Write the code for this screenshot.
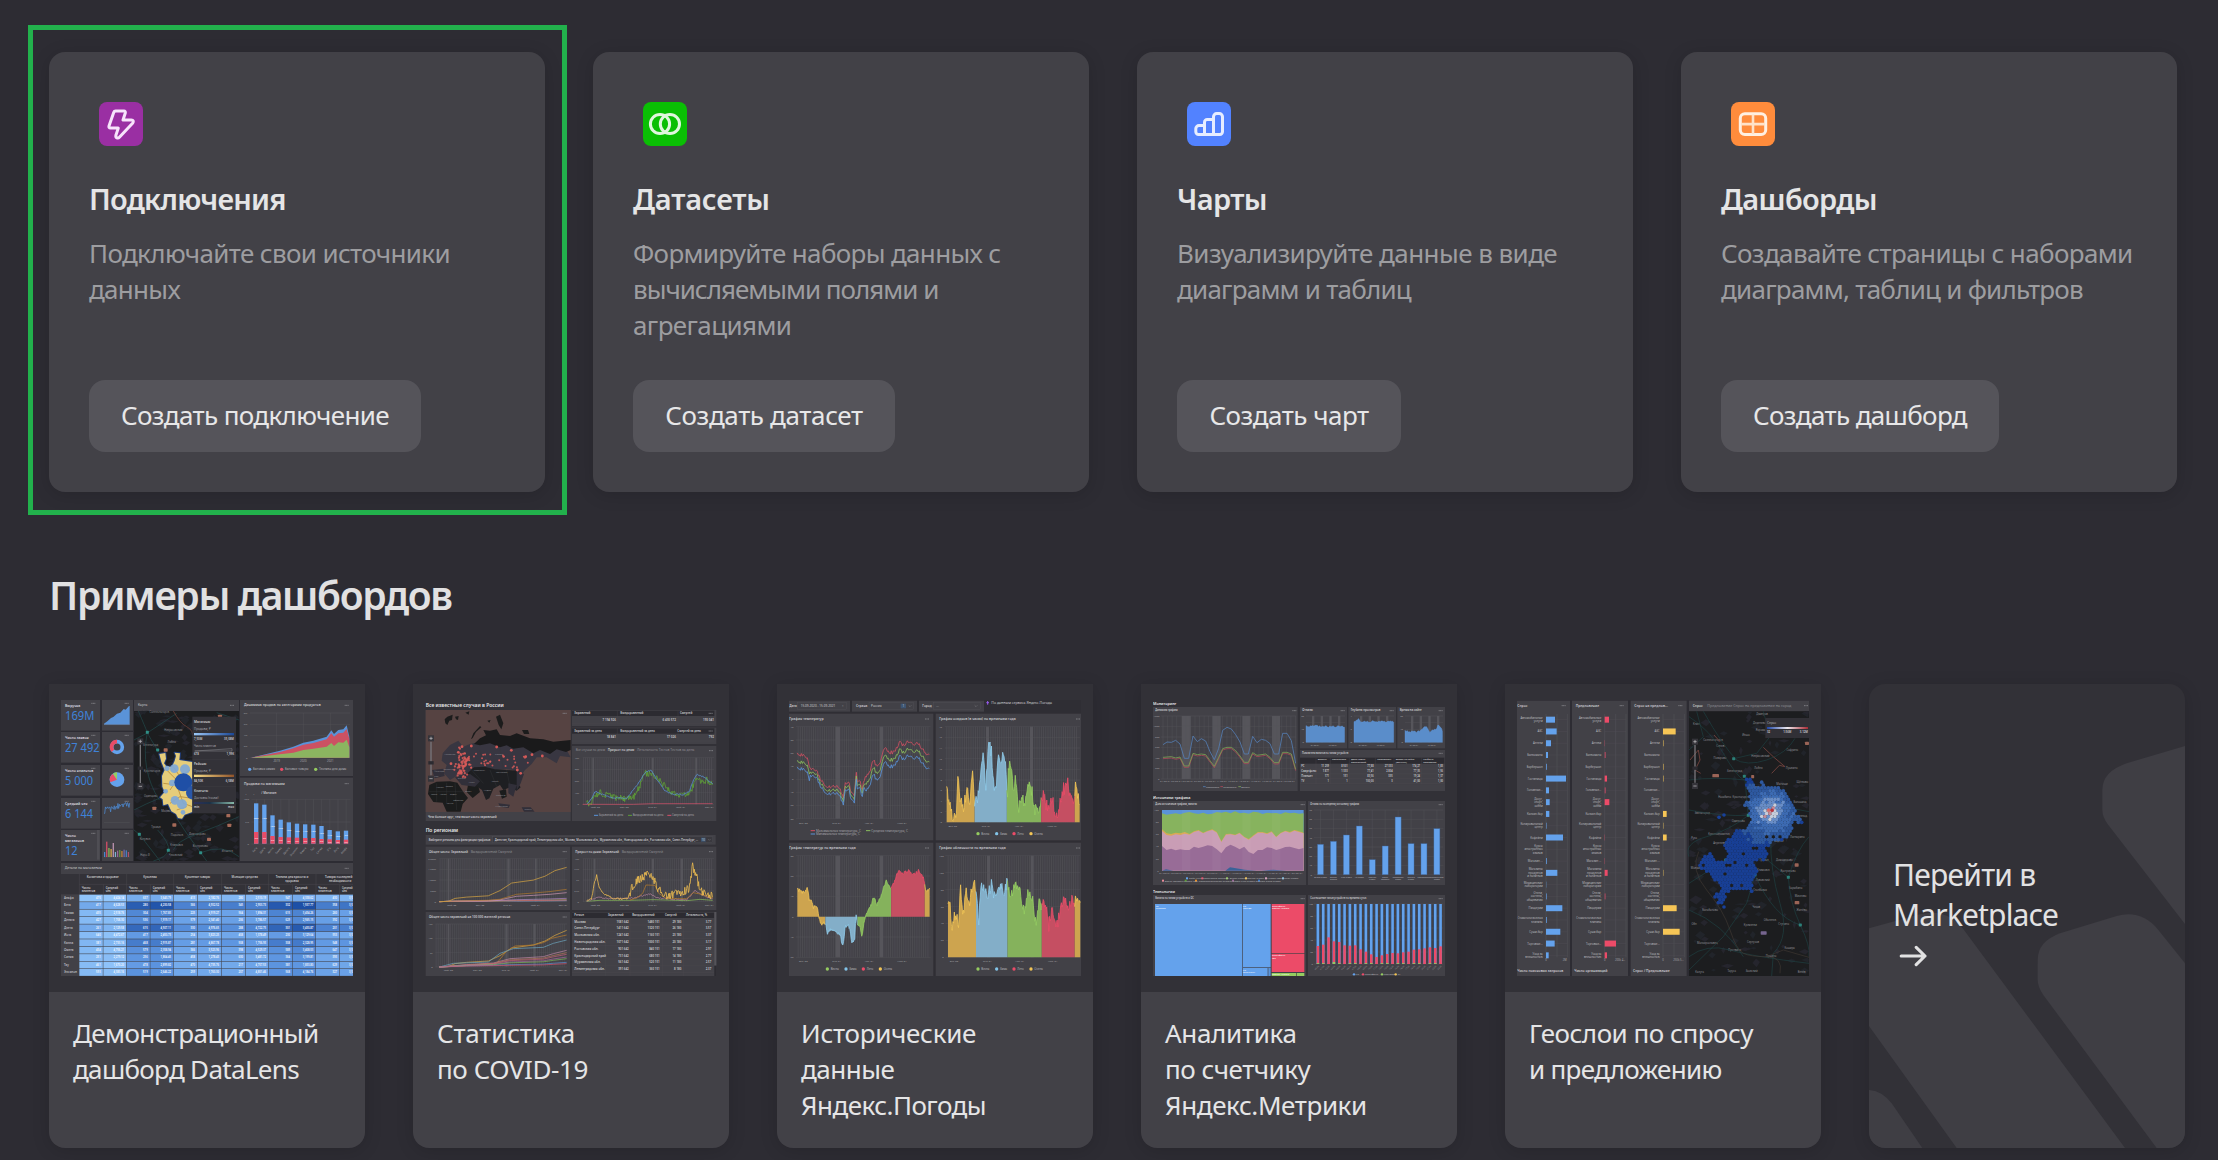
import type { ReactNode } from "react";

type Pt = [number, number];

/* ---------- drawing helpers for the dashboard previews ---------- */

function rng(seed: number) {
  let s = seed;
  return () => {
    s = (s * 1664525 + 1013904223) % 4294967296;
    return s / 4294967296;
  };
}

function interp(keys: Pt[], x: number) {
  for (let i = 1; i < keys.length; i++) {
    if (x <= keys[i][0]) {
      const [x0, y0] = keys[i - 1];
      const [x1, y1] = keys[i];
      return y0 + ((y1 - y0) * (x - x0)) / (x1 - x0 || 1);
    }
  }
  return keys[keys.length - 1][1];
}

function noisy(keys: Pt[], step: number, amp: number, seed: number): Pt[] {
  const r = rng(seed);
  const out: Pt[] = [];
  for (let x = keys[0][0]; x <= keys[keys.length - 1][0]; x += step) {
    out.push([x, interp(keys, x) + (r() - 0.5) * 2 * amp]);
  }
  return out;
}

const path = (p: Pt[]) => "M" + p.map(([x, y]) => `${x.toFixed(1)} ${y.toFixed(1)}`).join("L");
const area = (p: Pt[], base: number) => `${path(p)}L${p[p.length - 1][0]} ${base}L${p[0][0]} ${base}Z`;

function mix(t: number) {
  const stops = [
    [148, 200, 252],
    [94, 150, 225],
    [22, 72, 160],
  ];
  const k = Math.max(0, Math.min(1, t)) * 2;
  const i = Math.min(1, Math.floor(k));
  const f = k - i;
  return `rgb(${stops[i].map((c, n) => Math.round(c + (stops[i + 1][n] - c) * f)).join(",")})`;
}

function P({ x, y, r, b, fill = "#424147" }: { x: number; y: number; r: number; b: number; fill?: string }) {
  return <rect x={x} y={y} width={r - x} height={b - y} fill={fill} />;
}

function T({
  x,
  y,
  s = 9,
  fill = "#cbcbcf",
  w,
  bold,
  anchor,
  children,
}: {
  x: number;
  y: number;
  s?: number;
  fill?: string;
  w?: number;
  bold?: boolean;
  anchor?: "start" | "middle" | "end";
  children: ReactNode;
}) {
  return (
    <text
      x={x}
      y={y}
      fontSize={s}
      fill={fill}
      fontWeight={bold ? 600 : 400}
      textAnchor={anchor}
      textLength={w}
      lengthAdjust="spacingAndGlyphs"
    >
      {children}
    </text>
  );
}

function Dots({ x, y }: { x: number; y: number }) {
  return <path d={`M${x - 6} ${y}h12`} stroke="#8d8d92" strokeWidth="2.4" strokeDasharray="3.4 1" />;
}

function Grid({ x, r, ys, xs = [] }: { x: number; r: number; ys: number[]; xs?: number[] }) {
  return (
    <g stroke="#57565c" strokeWidth="1.2">
      {ys.map((y) => (
        <path key={y} d={`M${x} ${y}H${r}`} />
      ))}
      {xs.map((v) => (
        <path key={v} d={`M${v} ${ys[0]}V${ys[ys.length - 1]}`} />
      ))}
    </g>
  );
}

function Stripes({ x, r, y, b, step = 6.2, bands = [] }: { x: number; r: number; y: number; b: number; step?: number; bands?: Pt[] }) {
  const n = Math.floor((r - x) / step);
  return (
    <g>
      {Array.from({ length: n }, (_, i) => (
        <rect key={i} x={x + i * step + 1} y={y} width={step * 0.42} height={b - y} fill="#4d4c52" />
      ))}
      {bands.map(([bx, bw]) => (
        <rect key={bx} x={bx} y={y} width={bw} height={b - y} fill="#56555b" />
      ))}
    </g>
  );
}

function Axis({ x, ys, labels }: { x: number; ys: number[]; labels: string[] }) {
  return (
    <g>
      {ys.map((y, i) => (
        <T key={y} x={x} y={y + 2.5} s={7.5} fill="#9a9a9f" anchor="end">
          {labels[i]}
        </T>
      ))}
    </g>
  );
}

function Labels({ items, y, s = 7.5, fill = "#a5a5aa" }: { items: [number, string][]; y: number; s?: number; fill?: string }) {
  return (
    <g>
      {items.map(([x, t]) => (
        <T key={x} x={x} y={y} s={s} fill={fill} anchor="middle">
          {t}
        </T>
      ))}
    </g>
  );
}

function Preview({ box, children }: { box: string; children: ReactNode }) {
  return (
    <svg viewBox={box} className="h-[276px] w-[292px] shrink-0 font-['Noto_Sans',sans-serif]" preserveAspectRatio="none">
      {children}
    </svg>
  );
}

function DarkMap({ x, y, r, b, seed, names }: { x: number; y: number; r: number; b: number; seed: number; names: [number, number, string][] }) {
  const q = rng(seed);
  const blobs = Array.from({ length: 170 }, () => [x + q() * (r - x), y + q() * (b - y), 4 + q() * 16, 3 + q() * 11]);
  return (
    <g>
      <P x={x} y={y} r={r} b={b} fill="#1c1d1f" />
      {blobs.map(([cx, cy, w, h], i) => (
        <path
          key={i}
          d={`M${Math.max(x, cx - w)} ${cy}L${cx} ${Math.max(y, cy - h)}L${Math.min(r, cx + w)} ${cy - h * 0.2}L${cx + w * 0.1} ${Math.min(b, cy + h)}Z`}
          fill={i % 2 ? "#25252d" : "#21242a"}
        />
      ))}
      {names.map(([nx, ny, t], i) => (
        <T key={i} x={nx} y={ny} s={8} fill="#8f8f95" anchor="middle">
          {t}
        </T>
      ))}
    </g>
  );
}

function Zoomer({ x, y, b }: { x: number; y: number; b: number }) {
  return (
    <g>
      <rect x={x - 9} y={y - 9} width="18" height="18" fill="#35343a" />
      <rect x={x - 9} y={b - 9} width="18" height="18" fill="#35343a" />
      <path d={`M${x} ${y + 10}V${b - 10}`} stroke="#77767b" strokeWidth="4" />
      <path d={`M${x - 5} ${y}h10M${x} ${y - 5}v10M${x - 5} ${b}h10`} stroke="#c9c9cc" strokeWidth="2" />
      <rect x={x - 8} y={(y + b) / 2 + 8} width="16" height="10" fill="#2b2a30" />
    </g>
  );
}

/* ---------- preview 1: sales demo ---------- */

const DEMO_ROWS: [string, number][] = [
  ["Альфа", 0],
  ["Бета", 0.42],
  ["Гамма", 0.16],
  ["Дельта", 0.16],
  ["Дзета", 0.36],
  ["Йота", 0.06],
  ["Каппа", 0.24],
  ["Омега", 0.14],
  ["Сигма", 0.1],
  ["Тау", 0.08],
  ["Эпсилон", 0.12],
];
const DEMO_COLS = [148, 220, 290, 361, 431, 503, 575, 647, 716, 788, 858, 929, 1000];
const DEMO_BASE = [0.08, 0.04, 0.5, 0.52, 0.3, 0.3, 0.32, 0.34, 0.52, 0.54, 0.34, 0.36];

function DemoPreview() {
  const kpis: [string, string, number, number][] = [
    ["Выручка", "169M", 90, 88],
    ["Число заявок", "27 492", 186, 104],
    ["Число клиентов", "5 000", 285, 84],
    ["Средний чек", "6 144", 384, 84],
    ["", "12", 480, 38],
  ];
  const cell = rng(7);
  const tops = [400, 404, 436, 449, 457, 461, 463, 464, 468, 480, 484, 482];
  const reds = [486, 486, 498, 501, 502, 503, 504, 504, 507, 508, 510, 509];
  const bars = [546, 515, 534, 537, 519, 546, 542, 540, 543, 539, 541, 546];
  const colors = ["#4a86cf", "#e0506a", "#8dc35a", "#e0b04a", "#c79ab8", "#7fb4cf", "#9a6a9a", "#6a9a4a", "#cf8a3a", "#7a6ab0", "#4a86cf", "#b0506a"];
  const grow: Pt[] = [[663, 263], [700, 254], [750, 242], [790, 230], [820, 218], [850, 212], [890, 200], [904, 181], [912, 192], [925, 180], [940, 178], [950, 166], [958, 200]];
  const grow2: Pt[] = [[663, 263], [700, 256], [750, 246], [790, 235], [820, 224], [850, 219], [890, 208], [904, 190], [912, 200], [925, 190], [940, 188], [950, 177], [958, 206]];
  const grow3: Pt[] = [[663, 263], [700, 259], [750, 253], [790, 248], [820, 240], [850, 236], [890, 230], [904, 219], [912, 228], [925, 217], [940, 218], [950, 209], [958, 232]];
  const names: [number, number, string][] = [
    [388, 130, "Солнечногорск"], [430, 182, "Некрасовский"], [425, 218, "Лобня"], [362, 228, "Зеленоград"], [362, 382, "Одинцово"], [378, 473, "Троицк"],
    [441, 499, "Подольск"], [502, 496, "Домодедово"], [345, 511, "Калужск"], [440, 527, "Климовск"], [511, 531, "Востряково"], [437, 557, "Чеховский"],
    [592, 545, "Ильинск"], [345, 558, "Наро-Ф"], [408, 426, "Москва"], [366, 305, "Красногорск"],
  ];
  return (
    <Preview box="93 90 876 828">
      <P x={93} y={90} r={969} b={918} fill="#2d2c33" />
      {kpis.map(([label, value, y, w], i) => (
        <g key={y}>
          <P x={93} y={y} r={210} b={i === 4 ? 573 : y + 92} />
          <P x={216} y={y} r={309} b={i === 4 ? 573 : y + 92} />
          <T x={105} y={y + 21} s={10.5} bold fill="#dcdce0">
            {label}
          </T>
          <T x={105} y={i === 4 ? 556 : y + 61} s={36} fill="#3f82d8" w={w}>
            {value}
          </T>
          <Dots x={190} y={y + 10} />
          <Dots x={290} y={y + 10} />
        </g>
      ))}
      <T x={105} y={502} s={10.5} bold fill="#dcdce0">Число</T>
      <T x={105} y={516} s={10.5} bold fill="#dcdce0">магазинов</T>
      <P x={201} y={480} r={209} b={569} fill="#4f4e54" />
      <path d={area([[222, 161], [232, 154], [243, 144], [250, 141], [261, 131], [271, 128], [281, 117], [287, 119], [297, 108], [299, 108]], 164)} fill="#5a93d8" />
      <path d="M222 164H300" stroke="#77767c" />
      <circle cx={261} cy={231} r={16} fill="none" stroke="#64a2ec" strokeWidth={11} />
      <path d="M249 242A16 16 0 0 1 261 215" fill="none" stroke="#e94c66" strokeWidth={11} />
      <circle cx={261} cy={329} r={22} fill="#64a2ec" />
      <path d="M261 329L241 337A22 22 0 0 1 249 311Z" fill="#e94c66" />
      <path d="M261 329L249 311A22 22 0 0 1 261 307Z" fill="#95cc60" />
      <path d={path(noisy([[222, 436], [228, 408], [240, 420], [260, 410], [275, 402], [299, 404]], 2.2, 9, 5))} fill="none" stroke="#4d86cc" strokeWidth="2.4" />
      <path d="M222 458H299M222 561H300" stroke="#5f5e64" />
      {bars.map((y, i) => (
        <rect key={i} x={222 + i * 6.5} y={y} width={3.6} height={561 - y} fill={colors[i]} />
      ))}

      <P x={312} y={90} r={627} b={123} />
      <T x={324} y={109} s={10}>Карта</T>
      <Dots x={606} y={106} />
      <DarkMap x={312} y={123} r={627} b={573} seed={11} names={names} />
      <path
        d="M325 123Q345 170 352 187T383 240M312 210L350 190L440 130M627 150L560 128M383 480Q420 520 415 541T370 573M312 480L328 493L390 573M440 445L470 490L512 548L530 573M627 440Q560 470 500 492T430 540M312 420Q350 400 388 385M512 548Q580 520 627 560M352 187Q330 300 388 390"
        fill="none"
        stroke="#245052"
        strokeWidth="1.8"
      />
      <path d="M430 123Q450 160 470 170T490 205M405 245L395 270" fill="none" stroke="#6a3f38" strokeWidth="2.6" />
      <g fill="#2f8f86">
        {[[352, 187], [328, 493], [415, 541], [512, 548], [383, 240]].map(([cx, cy]) => (
          <rect key={cx} x={cx - 4.5} y={cy - 4.5} width="9" height="9" rx="2" />
        ))}
      </g>
      <g fill="#a56a58">
        {[[570, 139], [407, 240], [373, 415], [433, 465], [595, 437], [537, 508], [598, 466]].map(([cx, cy]) => (
          <rect key={cx} x={cx - 6} y={cy - 5} width="12" height="10" rx="2" />
        ))}
      </g>
      <path
        d="M388 252L406 249L408 266L402 280L410 290L426 290L434 272L438 258L434 248L450 250L448 270L487 276V426L464 434L456 446L444 444L438 432L424 424L414 402L400 406L398 388L390 382L404 366L397 350L396 318L404 300L394 276Z"
        fill="#e6cd7a"
        stroke="#223f7c"
        strokeWidth="6"
        strokeLinejoin="round"
        paintOrder="stroke"
      />
      <path d="M410 300L440 330L420 360M430 290L450 320L480 300M400 340L440 345L460 400L487 410M420 400L450 380L487 385M440 420L470 410" fill="none" stroke="#b98d3a" strokeWidth="2.5" />
      <g fill="#7fa9d8" opacity="0.92">
        <circle cx={411} cy={295} r={8} />
        <circle cx={433} cy={296} r={13} />
        <circle cx={465} cy={298} r={15} />
        <circle cx={427} cy={339} r={10} />
        <circle cx={407} cy={364} r={7} />
        <circle cx={435} cy={391} r={13} />
        <circle cx={456} cy={403} r={15} />
        <circle cx={459} cy={427} r={7} />
      </g>
      <circle cx={460} cy={337} r={27} fill="#1f4fa6" />
      <circle cx={489} cy={368} r={21} fill="#2a57a8" />
      <Zoomer x={331} y={214} b={349} />
      <P x={487} y={140} r={618} b={430} fill="#333238" />
      <path d="M487 269H618M487 349H618" stroke="#47464c" />
      <defs>
        <linearGradient id="demoBlue"><stop stopColor="#9cc7f7" /><stop offset="1" stopColor="#1a4694" /></linearGradient>
        <linearGradient id="demoGold"><stop stopColor="#f6dc87" /><stop offset="1" stopColor="#90532a" /></linearGradient>
        <linearGradient id="demoSea"><stop stopColor="#2d2f5c" /><stop offset=".4" stopColor="#1c3146" /><stop offset="1" stopColor="#86b8a8" /></linearGradient>
      </defs>
      <T x={492} y={160} s={9.5} bold>Магазины</T>
      <T x={492} y={181} s={9} fill="#a5a5aa">Продажи, ₽</T>
      <rect x={492} y={189} width={120} height={7} fill="url(#demoBlue)" />
      <T x={492} y={210} s={8.5} bold>7,50M</T>
      <T x={612} y={210} s={8.5} bold anchor="end">35,08M</T>
      <T x={492} y={232} s={8.5} fill="#a5a5aa">Число клиентов</T>
      <path d="M494 243L606 236V243Z" fill="none" stroke="#8d8d92" strokeWidth="1.5" />
      <T x={492} y={254} s={8.5} bold>678</T>
      <T x={612} y={254} s={8.5} bold anchor="end">1,99K</T>
      <T x={492} y={286} s={9.5} bold>Районы</T>
      <T x={492} y={307} s={9} fill="#a5a5aa">Продажи, ₽</T>
      <rect x={492} y={314} width={120} height={7} fill="url(#demoGold)" />
      <T x={492} y={335} s={8.5} bold>84,50K</T>
      <T x={612} y={335} s={8.5} bold anchor="end">6,58M</T>
      <T x={492} y={366} s={9.5} bold>Клиенты</T>
      <T x={492} y={386} s={9} fill="#a5a5aa">Доставка (точки)</T>
      <rect x={492} y={396} width={120} height={6} fill="url(#demoSea)" />
      <T x={492} y={414} s={8.5} bold>min</T>
      <T x={612} y={414} s={8.5} bold anchor="end">max</T>

      <P x={630} y={90} r={969} b={318} />
      <T x={642} y={109} s={10} w={230} bold>Динамика продаж по категориям продуктов</T>
      <Dots x={950} y={106} />
      <Grid x={660} r={960} ys={[129, 163, 196, 229, 263]} xs={[740, 820, 901]} />
      <Axis x={652} ys={[129, 163, 196, 229, 263]} labels={["8M", "6M", "4M", "2M", "0"]} />
      <path d={area(grow, 263)} fill="#5a92d8" />
      <path d={area(grow2, 263)} fill="#cc5163" />
      <path d={area(grow3, 263)} fill="#8bb560" />
      <Labels y={277} s={8.5} items={[[740, "2019"], [820, "2020"], [901, "2021"]]} />
      {[["#64a2ec", 659, "Бытовая химия", 66], ["#e94c66", 755, "Бытовые товары", 70], ["#95cc60", 857, "Техника для дома", 82]].map(([c, x, t, w]) => (
        <g key={x as number}>
          <circle cx={x as number} cy={298} r={5} fill={c as string} />
          <T x={(x as number) + 10} y={301} s={9} w={w as number} fill="#b5b5ba">{t}</T>
        </g>
      ))}

      <P x={630} y={323} r={969} b={573} />
      <T x={642} y={345} s={10} w={122} bold>Продажи по магазинам</T>
      <Dots x={950} y={341} />
      <T x={644} y={374} s={10}>←</T>
      <T x={664} y={374} s={10}>→</T>
      <T x={694} y={373} s={9} bold>/ Магазин</T>
      <Grid x={664} r={962} ys={[388, 456, 522]} xs={tops.map((_, i) => 679 + i * 24.5)} />
      <Axis x={657} ys={[388, 456, 522]} labels={["10M", "5M", "0"]} />
      {tops.map((y, i) => (
        <g key={i}>
          <rect x={672 + i * 24.5} y={y} width={13} height={521 - y} fill="#64a2ec" />
          <rect x={672 + i * 24.5} y={reds[i]} width={13} height={521 - reds[i]} fill="#e94c66" />
          <T x={679 + i * 24.5} y={(y + reds[i]) / 2 + 3} s={6.5} fill="#fff" anchor="middle">{`${20 - i}M`}</T>
          <T x={679 + i * 24.5} y={(reds[i] + 521) / 2 + 3} s={6.5} fill="#fff" anchor="middle">5M</T>
          <text x={682 + i * 24.5} y={534} fontSize={8} fill="#a5a5aa" textAnchor="end" transform={`rotate(-50 ${682 + i * 24.5} 534)`}>
            {["Бета", "Дзета", "Каппа", "Гамма", "Дельта", "Эпсилон", "Омега", "Тау", "Сигма", "Эта", "Йота", "Альфа"][i]}
          </text>
        </g>
      ))}

      <P x={93} y={579} r={969} b={918} />
      <T x={104} y={598} s={10} w={112}>Детали по магазинам</T>
      <Dots x={950} y={595} />
      <P x={93} y={612} r={969} b={673} fill="#333238" />
      {["Косметика и здоровье", "Кухонная", "Кухонные товары", "Моющие средства", "Техника для красоты и"].map((t, i) => (
        <T key={t} x={218 + i * 142} y={625} s={8.5} bold anchor="middle">{t}</T>
      ))}
      <T x={786} y={636} s={8.5} bold anchor="middle">здоровья</T>
      <T x={967} y={625} s={8.5} w={82} bold anchor="end">Товары последней</T>
      <T x={964} y={636} s={8.5} bold anchor="end">необходимости</T>
      <path d="M148 643H969M148 612V673M290 612V673M431 612V673M575 612V673M716 612V673M858 612V673M220 643V673M361 643V673M503 643V673M647 643V673M788 643V673M929 643V673" stroke="#4a494f" strokeWidth="1.5" />
      {DEMO_COLS.slice(0, 12).map((x, i) => (
        <g key={x}>
          <T x={x + 7} y={656} s={8.5} bold w={i === 11 ? 32 : undefined}>{i % 2 ? "Средний" : "Число"}</T>
          <T x={x + 7} y={667} s={8.5} bold>{i % 2 ? "чек" : "клиентов"}</T>
        </g>
      ))}
      {DEMO_ROWS.map(([name, k], ri) => {
        const y = 674 + ri * 22.3;
        return (
          <g key={name}>
            <T x={102} y={y + 13} s={9} bold fill="#bdbdc2">{name}</T>
            {DEMO_COLS.slice(0, 12).map((x, ci) => {
              const v = DEMO_BASE[ci] * 0.75 + k * (0.5 + DEMO_BASE[ci] * 1.4) + (cell() - 0.5) * 0.06;
              const n = 1 + Math.floor(cell() * 4);
              const whole = 100 + Math.floor(cell() * 899);
              const cents = 10 + Math.floor(cell() * 89);
              return (
                <g key={x}>
                  <rect x={x} y={y} width={DEMO_COLS[ci + 1] - x - 1.5} height={20.6} fill={mix(ri === 0 ? DEMO_BASE[ci] * 0.55 : v)} />
                  <T x={ci === 11 ? 968 : DEMO_COLS[ci + 1] - 8} y={y + 13} s={8} bold fill="#f3f7ff" anchor="end">
                    {ci === 11 ? "3,5" : ci % 2 ? `${n},${whole}.${cents}` : 150 + Math.floor(whole / 2)}
                  </T>
                </g>
              );
            })}
          </g>
        );
      })}
    </Preview>
  );
}

/* ---------- preview 2: COVID-19 ---------- */

function CovidPreview() {
  const q = rng(31);
  const dots = Array.from({ length: 104 }, (_, i) => {
    if (i < 62) return [187 + (q() + q() + q() - 1.5) * 20, 283 + (q() + q() + q() - 1.5) * 40, 3.4];
    return [195 + Math.pow(q(), 1.8) * 190, 250 + q() * 46, 3];
  });
  const regions = ["Москва", "Санкт-Петербург", "Московская обл.", "Нижегородская обл.", "Ростовская обл.", "Краснодарский край", "Мурманская обл.", "Ленинградская обл."];
  const months1: [number, string][] = [[155, "Май '20"], [240, "Сен '20"], [323, "Янв '21"], [406, "Май '21"], [489, "Сен '21"]];
  const months2: [number, string][] = [[586, "Май '20"], [673, "Сен '20"], [758, "Янв '21"], [842, "Май '21"], [928, "Сен '21"]];
  const curve = (s: number, t: number, base: number): Pt[] => [
    [118, base], [145, base - 1 * s], [165, base - 10 * s], [200, base - 14 * s], [265, base - 18 * s], [300, base - 34 * s], [335, base - 57 * s], [400, base - 66 * s], [435, base - 78 * s], [465, base - 95 * s], [500, base - t],
  ];
  return (
    <Preview box="75 90 876 828">
      <P x={75} y={90} r={951} b={918} fill="#323137" />
      <T x={77} y={110} s={14.5} bold w={234} fill="#e8e8ea">Все известные случаи в России</T>
      <P x={77} y={120} r={512} b={453} />
      <P x={77} y={120} r={512} b={426} fill="#564342" />
      <path d="M134 148L142 140L158 134L156 150L148 152L142 165L136 160ZM165 140L176 138L174 150L168 148ZM196 128L208 124L206 134ZM213 208L220 190L240 168L244 172L228 186L218 204ZM288 140L300 134L310 160L304 178L296 165ZM262 152L272 150L268 158ZM366 180L384 180L388 192L372 192Z" fill="#1c1c1c" />
      <path d="M128 250L150 225L175 212L190 230L210 222L240 215L280 212L340 225L420 232L500 240L512 262L480 258L470 280L440 262L410 262L395 282L375 300L362 318L350 330L340 300L320 298L290 300L255 290L230 300L205 320L170 318L150 330L132 310L140 285L125 272Z" fill="#383641" />
      <path d="M222 222L240 205L258 196L250 180L270 182L290 178L300 195L330 198L350 190L390 205L430 208L460 215L512 210V240L498 246L470 238L450 252L420 240L400 250L370 232L340 236L320 226L300 232L270 220L240 226Z" fill="#1a1a1b" />
      <path d="M200 312L222 292L255 290L285 298L320 300L350 302L362 318L352 338L362 352L350 362L330 352L310 360L300 345L280 356L268 385L258 390L246 360L228 348L210 352L196 332Z" fill="#1e1f22" />
      <path d="M88 345L110 335L150 334L172 338L190 366L204 384L188 402L182 425H140L128 398L100 396L84 372ZM205 340L235 350L240 366L218 384L200 366ZM298 362L318 358L320 380L306 386Z" fill="#1b1c1c" />
      <path d="M165 322L210 312L240 334L225 350L185 345ZM96 300L130 296L134 318L104 325ZM350 300L372 312L362 340L350 362ZM325 340L350 345L340 380L325 370ZM295 400L330 404L326 414L300 410ZM365 412L392 412L404 425H372Z" fill="#312f39" />
      <path d="M88 365H190M110 340V395M140 338V400M165 340L170 420M215 300L250 340M270 300L290 350M320 300L330 350M240 240L250 285M300 235L310 298" stroke="#34383a" strokeWidth="1.2" fill="none" />
      {[[150, 255, "Норвегия"], [297, 256, "Россия"], [238, 302, "Казахстан"], [305, 310, "Монголия"], [285, 335, "Китай"], [118, 305, "Франция"], [100, 322, "Испания"], [148, 300, "Германия"], [185, 326, "Турция"], [120, 354, "Алжир"], [148, 352, "Ливия"], [102, 376, "Мали"], [130, 376, "Нигер"], [160, 374, "Судан"], [175, 392, "Эфиопия"], [215, 338, "Иран"], [262, 362, "Индия"], [302, 378, "Таиланд"], [150, 402, "Конго"], [305, 410, "Индонезия"], [384, 420, "Папуа"], [205, 366, "Оман"]].map(([x, y, t]) => (
        <T key={t} x={x as number} y={y as number} s={7} fill="#8c8c92" anchor="middle">{t}</T>
      ))}
      {dots.map(([x, y, r], i) => (
        <circle key={i} cx={x} cy={y} r={r} fill="#d95c59" opacity="0.85" />
      ))}
      {[[186, 230], [214, 228], [290, 231], [334, 241], [175, 247], [377, 260], [396, 254], [427, 258], [362, 310], [352, 300], [153, 281]].map(([x, y]) => (
        <circle key={x} cx={x} cy={y} r={4.2} fill="#d65a58" />
      ))}
      <Zoomer x={93} y={205} b={326} />
      <Dots x={494} y={130} />
      <T x={84} y={444} s={9.5} bold w={206}>Чем больше круг, тем выше число заражений</T>

      <P x={516} y={120} r={949} b={168} />
      <P x={516} y={173} r={949} b={222} />
      {[120, 173].map((y, i) => (
        <g key={y}>
          <P x={516} y={y + 2} r={943} b={y + 18} fill="#2c2b31" />
          <T x={523} y={y + 13} s={8.5} bold>{i ? "Заражений за день" : "Заражений"}</T>
          <T x={661} y={y + 13} s={8.5} bold>{i ? "Выздоровлений за день" : "Выздоровлений"}</T>
          <T x={i ? 832 : 840} y={y + 13} s={8.5} bold>{i ? "Смертей за день" : "Смертей"}</T>
          <T x={648} y={y + 32} s={9} bold anchor="end">{i ? "18 841" : "7 194 926"}</T>
          <T x={828} y={y + 32} s={9} bold anchor="end">{i ? "17 026" : "6 430 572"}</T>
          <T x={942} y={y + 32} s={9} bold anchor="end">{i ? "792" : "193 041"}</T>
          <path d={`M652 ${y + 2}V${y + 40}M834 ${y + 2}V${y + 40}M516 ${y + 40}H943`} stroke="#4b4a50" />
          <Dots x={932} y={y + 10} />
        </g>
      ))}

      <P x={516} y={228} r={949} b={453} />
      <T x={527} y={244} s={9} fill="#8f8f94" w={88}>Все случаи по дням</T>
      <T x={623} y={244} s={9} bold w={80}>Прирост по дням</T>
      <T x={711} y={244} s={9} fill="#8f8f94" w={172}>Летальность  Тестов  Тестов за день</T>
      <Dots x={933} y={242} />
      <Stripes x={548} r={942} y={263} b={403} bands={[[577, 5], [756, 5], [886, 5]]} />
      <Grid x={548} r={942} ys={[263, 298, 333, 368, 403]} />
      <Axis x={537} ys={[263, 298, 333, 368, 403]} labels={["40k", "30k", "20k", "10k", "0"]} />
      <path d={path(noisy([[560, 402], [575, 395], [586, 376], [600, 368], [625, 378], [650, 384], [695, 386], [705, 375], [720, 345], [735, 312], [750, 308], [775, 322], [800, 358], [820, 372], [865, 374], [875, 360], [885, 330], [900, 334], [920, 330], [938, 342]], 2, 10, 8))} fill="none" stroke="#5d9c36" strokeWidth="2.6" />
      <path d={path(noisy([[560, 403], [575, 385], [586, 364], [600, 370], [630, 382], [680, 386], [695, 366], [715, 340], [735, 308], [753, 300], [770, 328], [795, 362], [815, 372], [850, 374], [868, 364], [880, 330], [890, 314], [910, 320], [938, 342]], 3, 1.8, 3))} fill="none" stroke="#5a93d8" strokeWidth="2.4" />
      <path d="M548 403H700L760 401H938" stroke="#d9506a" strokeWidth="2" fill="none" />
      <Labels y={415} items={months2} />
      {[["#5a93d8", 582, "Заражений за день", 74], ["#5d9c36", 684, "Выздоровлений за день", 92], ["#d9506a", 802, "Смертей за день", 66]].map(([c, x, t, w]) => (
        <g key={x as number}>
          <path d={`M${x} 436h12`} stroke={c as string} strokeWidth="3" />
          <T x={(x as number) + 14} y={439} s={8} w={w as number} fill="#a5a5aa">{t}</T>
        </g>
      ))}

      <T x={77} y={485} s={14.5} bold w={97} fill="#e8e8ea">По регионам</T>
      <P x={77} y={495} r={947} b={524} />
      <T x={86} y={513} s={9} bold w={185}>Выберите регионы для фильтрации графиков</T>
      <rect x={278} y={500} width={660} height={18} fill="#3a393f" stroke="#55545a" />
      <T x={284} y={512} s={9} bold w={610}>Дагестан, Краснодарский край, Ленинградская обл., Москва, Московская обл., Мурманская обл., Новгородская обл., Ростовская обл., Санкт-Петербург, ...</T>
      <rect x={903} y={503} width={14} height={12} fill="#3d5573" />
      <T x={910} y={512} s={8} anchor="middle">10</T>
      <path d="M924 507l4 4 4-4" stroke="#88888d" fill="none" />

      <P x={77} y={530} r={510} b={720} />
      <T x={87} y={548} s={9.5} bold w={117}>Общее число: Заражений</T>
      <T x={212} y={548} s={9.5} fill="#8f8f94" w={124}>Выздоровлений  Смертей</T>
      <Dots x={494} y={545} />
      <Stripes x={118} r={502} y={566} b={695} bands={[[143, 5], [322, 7], [405, 5]]} />
      <Grid x={118} r={502} ys={[566, 598, 630, 663, 695]} />
      <Axis x={108} ys={[566, 598, 630, 663, 695]} labels={["2 000k", "1 500k", "1 000k", "500k", "0"]} />
      {([[0.14, 3, "#8fb8e8"], [0.1, 6, "#7dbb5a"], [0.12, 5, "#d9506a"], [0.2, 10, "#b58ac8"], [0.28, 27, "#d39ab8"], [0.36, 37, "#b47a2c"]] as [number, number, string][]).map(([s, t, c]) => (
        <path key={c} d={path([[118, 695], [145, 694], [265, 695 - 12 * s], [300, 695 - 20 * s], [350, 695 - t * 0.6], [400, 695 - t * 0.7], [450, 695 - t * 0.82], [500, 695 - t]])} fill="none" stroke={c} strokeWidth="2" />
      ))}
      <path d={path(curve(0.98, 103, 695))} fill="none" stroke="#c79a42" strokeWidth="2.4" />
      <Labels y={709} items={months1} />

      <P x={516} y={530} r={949} b={720} />
      <T x={526} y={548} s={9.5} bold w={131}>Прирост по дням: Заражений</T>
      <T x={665} y={548} s={9.5} fill="#8f8f94" w={124}>Выздоровлений  Смертей</T>
      <Dots x={933} y={545} />
      <Stripes x={548} r={942} y={566} b={695} bands={[[581, 5], [756, 6], [842, 7]]} />
      <Grid x={548} r={942} ys={[566, 598, 630, 663, 695]} />
      <Axis x={537} ys={[566, 598, 630, 663, 695]} labels={["10k", "7.5k", "5k", "2.5k", "0"]} />
      <path d={path([[560, 694], [600, 691], [690, 691], [760, 689], [860, 692], [900, 688], [938, 691]])} fill="none" stroke="#8dc35a" strokeWidth="2" />
      <path d={path(noisy([[560, 694], [595, 682], [620, 686], [700, 684], [750, 672], [770, 684], [860, 690], [885, 662], [910, 676], [938, 688]], 3, 2, 14))} fill="none" stroke="#c48aa8" strokeWidth="2" />
      <path d={path([[690, 690], [710, 684], [728, 670], [738, 645], [765, 646], [776, 670], [800, 686], [860, 686], [880, 668], [900, 672], [938, 684]])} fill="none" stroke="#b47a2c" strokeWidth="2.2" />
      <path d={path([...noisy([[560, 694], [575, 685], [583, 640], [590, 615], [598, 655], [612, 672], [640, 686], [685, 686]], 2, 3, 21), ...noisy([[687, 680], [695, 655], [712, 632], [730, 620], [745, 605], [760, 625], [775, 660], [800, 678], [840, 668], [868, 655], [878, 588], [888, 615], [898, 655], [915, 672], [938, 680]], 1.8, 13, 22)])} fill="none" stroke="#edbd50" strokeWidth="2.4" />
      <Labels y={709} items={months2} />

      <P x={77} y={726} r={510} b={918} />
      <T x={87} y={744} s={9.5} bold w={244}>Общее число заражений на 100 000 жителей региона</T>
      <Dots x={494} y={741} />
      <Stripes x={106} r={502} y={762} b={891} bands={[[143, 5], [316, 7], [400, 7]]} />
      <Grid x={106} r={502} ys={[762, 805, 848, 891]} />
      <Axis x={98} ys={[762, 805, 848, 891]} labels={["15k", "10k", "5k", "0"]} />
      <path d={path(curve(1, 110, 891))} fill="none" stroke="#c79a42" strokeWidth="2.4" />
      <path d={path([[118, 891], [240, 885], [290, 880], [320, 843], [345, 828], [400, 825], [430, 818], [455, 805], [500, 795]])} fill="none" stroke="#b47a2c" strokeWidth="2.2" />
      <path d={path([[118, 891], [160, 880], [265, 876], [300, 850], [340, 836], [430, 832], [460, 820], [500, 810]])} fill="none" stroke="#6aa0b8" strokeWidth="2.2" />
      {([[50, "#c48aa8"], [43, "#b87a5a"], [38, "#c7607a"], [30, "#a86aa0"], [25, "#7dbb5a"], [14, "#5a93d8"], [10, "#d9506a"]] as [number, string][]).map(([t, c]) => (
        <path key={c} d={path([[118, 891], [200, 889 - t * 0.1], [280, 889 - t * 0.2], [330, 891 - t * 0.5], [430, 891 - t * 0.62], [460, 891 - t * 0.8], [500, 891 - t]])} fill="none" stroke={c} strokeWidth="2" />
      ))}
      <Labels y={904} items={[[145, "Май '20"], [232, "Сен '20"], [318, "Янв '21"], [403, "Май '21"], [489, "Сен '21"]]} />

      <P x={516} y={726} r={949} b={918} />
      <P x={516} y={728} r={943} b={744} fill="#2c2b31" />
      {[[523, "Регион"], [624, "Заражений"], [697, "Выздоровлений"], [795, "Смертей"], [858, "Летальность, %"]].map(([x, t]) => (
        <T key={t} x={x as number} y={739} s={8.2} bold>{t}</T>
      ))}
      <path d="M617 745V918M690 745V918M787 745V918M850 745V918" stroke="#4e4d53" />
      {regions.map((t, i) => (
        <g key={t}>
          <path d={`M516 ${765 + i * 20.4}H943`} stroke="#4e4d53" />
          <T x={523} y={758 + i * 20.4} s={9} bold>{t}</T>
          {[[686, `${1581 - i * 170} 642`], [779, `${1480 - i * 160} 151`], [844, `${29 - i * 3} 180`], [934, `${(3.77 - i * 0.2).toFixed(2)}`]].map(([x, v]) => (
            <T key={x as number} x={x as number} y={758 + i * 20.4} s={8.5} bold anchor="end">{v}</T>
          ))}
        </g>
      ))}
      <P x={943} y={726} r={949} b={887} fill="#55545a" />
      <P x={943} y={887} r={949} b={918} fill="#2c2b31" />
    </Preview>
  );
}

/* ---------- preview 3: weather history ---------- */

function WeatherPreview() {
  const temp: Pt[] = [[82, 252], [100, 258], [112, 262], [118, 290], [126, 296], [142, 306], [152, 332], [170, 350], [208, 352], [214, 372], [220, 382], [226, 338], [236, 334], [243, 370], [254, 376], [258, 305], [263, 340], [270, 335], [276, 358], [284, 325], [300, 300], [312, 264], [318, 288], [330, 275], [345, 230], [355, 248], [370, 248], [388, 218], [400, 224], [415, 215], [430, 222], [445, 218], [460, 240], [470, 258], [480, 255]];
  const shift = (d: number) => noisy(temp, 3, 6, 4).map(([x, y]) => [x, y + d * (x > 120 && x < 285 ? 0.5 : 1)] as Pt);
  const seasons = (keys: Pt[], cuts: number[], base: number, amp: number, seed: number) => {
    const pts = noisy(keys, 2.1, amp, seed);
    const fills = ["#cda44f", "#83aec8", "#85b25c", "#c54f62", "#cda44f"];
    const strokes = ["#f3c556", "#8fcdec", "#95cf62", "#ec4b68", "#f3c556"];
    return cuts.slice(1).map((c, i) => {
      const seg = pts.filter(([x]) => x >= cuts[i] - 1.5 && x <= c + 0.6);
      return (
        <g key={c}>
          <path d={area(seg, base)} fill={fills[i]} />
          <path d={path(seg)} fill="none" stroke={strokes[i]} strokeWidth="2.4" />
        </g>
      );
    });
  };
  const legend = (x0: number, y: number) =>
    [["#95cc60", 0, "Весна"], ["#83c4e8", 56, "Зима"], ["#ec4b68", 108, "Лето"], ["#f3c556", 159, "Осень"]].map(([c, dx, t]) => (
      <g key={t}>
        <circle cx={x0 + (dx as number)} cy={y} r={5} fill={c as string} />
        <T x={x0 + (dx as number) + 10} y={y + 3} s={8.5} fill="#b5b5ba">{t}</T>
      </g>
    ));
  return (
    <Preview box="57 90 876 828">
      <P x={57} y={90} r={933} b={918} fill="#2f2e34" />
      <P x={57} y={92} r={240} b={125} />
      <P x={246} y={92} r={441} b={125} />
      <P x={447} y={92} r={642} b={125} />
      <g fill="none" stroke="#56555b">
        <rect x={83} y={98} width={146} height={20} />
        <rect x={297} y={98} width={134} height={20} />
        <rect x={491} y={98} width={140} height={20} />
        <path d="M416 106l4 4 4-4M614 106l4 4 4-4" stroke="#9a9a9f" />
      </g>
      <T x={58} y={111} s={9.5} bold>Дата</T>
      <T x={92} y={111} s={9} w={104}>15.09.2020 - 15.09.2021</T>
      <T x={216} y={111} s={8} fill="#88888d">×</T>
      <T x={258} y={111} s={9.5} bold>Страна</T>
      <T x={303} y={111} s={9.5}>Россия</T>
      <rect x={392} y={101} width={16} height={14} fill="#3d5573" />
      <T x={400} y={112} s={9} anchor="middle">1</T>
      <T x={457} y={111} s={9.5} bold>Город</T>
      <T x={498} y={111} s={9} fill="#88888d">—</T>
      <path d="M653 93v11M649 98h8" stroke="#9a5cf0" strokeWidth="3" />
      <T x={664} y={103} s={10} w={182}>По данным сервиса Яндекс.Погода</T>

      <P x={57} y={131} r={490} b={511} />
      <T x={58} y={150} s={10} bold w={103}>График температур</T>
      <Dots x={471} y={147} />
      <Stripes x={82} r={482} y={170} b={446} step={6.6} bands={[[197, 13], [330, 9]]} />
      <Grid x={78} r={482} ys={[170, 210, 249, 289, 328, 367, 406, 446]} />
      <Axis x={70} ys={[170, 210, 249, 289, 328, 367, 406, 446]} labels={["40", "30", "20", "10", "0", "10", "20", "30"]} />
      <path d={path(shift(0))} fill="none" stroke="#cf4f62" strokeWidth="2.5" />
      <path d={path(shift(22))} fill="none" stroke="#8bbf5e" strokeWidth="2.5" />
      <path d={path(shift(42))} fill="none" stroke="#5a93d8" strokeWidth="2.5" />
      <Labels y={461} items={[[100, "Окт '20"], [200, "Янв '21"], [297, "Апр '21"], [396, "Июл '21"]]} />
      <path d="M122 482h13" stroke="#cf4f62" strokeWidth="3" />
      <T x={138} y={485} s={9} w={135} fill="#a5a5aa">Максимальная температура, С</T>
      <path d="M288 482h13" stroke="#8bbf5e" strokeWidth="3" />
      <T x={304} y={485} s={9} w={110} fill="#a5a5aa">Средняя температура, С</T>
      <path d="M122 492h13" stroke="#5a93d8" strokeWidth="3" />
      <T x={138} y={495} s={9} w={132} fill="#a5a5aa">Минимальная температура, С</T>

      <P x={497} y={131} r={933} b={511} />
      <T x={508} y={150} s={10} bold w={229}>График осадков (в часах) по временам года</T>
      <Dots x={924} y={147} />
      <Stripes x={528} r={930} y={170} b={457} step={6.6} bands={[[648, 9], [780, 9]]} />
      <Grid x={524} r={930} ys={[170, 202, 234, 266, 298, 330, 361, 393, 425, 457]} />
      <Axis x={516} ys={[170, 202, 234, 266, 298, 330, 361, 393, 425, 457]} labels={["18", "16", "14", "12", "10", "8", "6", "4", "2", "0"]} />
      {seasons(
        [[530, 360], [536, 400], [545, 435], [560, 425], [565, 300], [570, 380], [578, 415], [590, 370], [600, 390], [608, 290], [613, 385], [622, 405], [630, 320], [640, 265], [648, 345], [655, 222], [664, 240], [672, 350], [678, 370], [686, 240], [693, 305], [698, 230], [706, 270], [712, 410], [715, 280], [721, 275], [728, 350], [736, 330], [746, 410], [756, 390], [765, 410], [773, 340], [786, 360], [796, 425], [805, 410], [814, 390], [824, 375], [832, 420], [845, 390], [858, 430], [870, 405], [880, 360], [892, 335], [900, 390], [912, 400], [916, 325], [922, 375], [930, 390]],
        [530, 614, 712, 814, 914, 931], 457, 22, 42)}
      <Labels y={471} items={[[548, "Окт '20"], [648, "Янв '21"], [747, "Апр '21"], [847, "Июл '21"]]} />
      {legend(624, 491)}

      <P x={57} y={518} r={490} b={918} />
      <T x={58} y={537} s={10} bold w={199}>График температур по временам года</T>
      <Dots x={471} y={534} />
      <Stripes x={82} r={482} y={557} b={862} step={6.6} bands={[[197, 13], [330, 9]]} />
      <Grid x={78} r={482} ys={[557, 618, 679, 740, 801, 862]} />
      <Axis x={70} ys={[557, 618, 679, 740, 801, 862]} labels={["30", "20", "10", "0", "10", "20"]} />
      {seasons(
        [[82, 658], [100, 668], [113, 655], [118, 695], [124, 688], [130, 712], [142, 708], [148, 752], [156, 762], [166, 758], [172, 790], [185, 775], [200, 790], [210, 790], [218, 832], [226, 770], [236, 765], [246, 815], [254, 812], [258, 730], [262, 770], [270, 765], [275, 805], [282, 755], [292, 725], [303, 708], [312, 678], [320, 706], [335, 675], [348, 630], [355, 645], [363, 655], [372, 640], [384, 604], [395, 612], [415, 602], [430, 615], [446, 602], [460, 625], [468, 664], [480, 658]],
        [82, 166, 262, 363, 464, 481], 740, 5, 9)}
      <Labels y={877} items={[[100, "Окт '20"], [200, "Янв '21"], [297, "Апр '21"], [396, "Июл '21"]]} />
      {legend(172, 897)}

      <P x={497} y={518} r={933} b={918} />
      <T x={508} y={537} s={10} bold w={199}>График облачности по временам года</T>
      <Dots x={924} y={534} />
      <Stripes x={532} r={930} y={557} b={862} step={6.6} bands={[[651, 9], [782, 9]]} />
      <Grid x={526} r={930} ys={[557, 608, 659, 710, 760, 811, 862]} />
      <Axis x={521} ys={[557, 608, 659, 710, 760, 811, 862]} labels={["120", "100", "80", "60", "40", "20", "0"]} />
      {seasons(
        [[534, 710], [540, 690], [545, 790], [552, 745], [560, 735], [566, 780], [571, 640], [580, 740], [588, 665], [598, 695], [605, 665], [612, 635], [618, 660], [622, 690], [626, 770], [632, 650], [640, 645], [650, 680], [665, 640], [672, 675], [685, 655], [692, 640], [702, 675], [710, 640], [716, 655], [722, 680], [734, 635], [748, 660], [762, 720], [775, 665], [790, 700], [797, 760], [806, 700], [816, 710], [826, 690], [836, 770], [846, 710], [860, 775], [872, 710], [885, 690], [896, 720], [906, 690], [914, 700], [918, 670], [924, 700], [931, 685]],
        [534, 618, 714, 815, 914, 931], 862, 18, 77)}
      <Labels y={877} items={[[552, "Окт '20"], [652, "Янв '21"], [749, "Апр '21"], [848, "Июл '21"]]} />
      {legend(624, 897)}
    </Preview>
  );
}

/* ---------- preview 4: site analytics ---------- */

function MetricaPreview() {
  const visits: Pt[] = [[99, 224], [111, 216], [124, 217], [137, 211], [150, 222], [163, 265], [176, 265], [189, 198], [202, 215], [214, 206], [227, 213], [240, 245], [253, 269], [266, 235], [278, 181], [291, 172], [304, 177], [317, 194], [330, 216], [343, 252], [355, 252], [368, 199], [381, 218], [394, 208], [407, 211], [420, 221], [433, 252], [446, 252], [458, 190], [471, 190], [484, 212], [497, 280]];
  const users: Pt[] = [[99, 262], [124, 260], [137, 264], [150, 261], [163, 288], [176, 288], [189, 250], [202, 254], [214, 252], [227, 254], [240, 272], [253, 289], [266, 262], [278, 236], [291, 232], [304, 232], [317, 242], [330, 258], [343, 277], [355, 277], [368, 248], [381, 256], [407, 252], [420, 262], [433, 278], [446, 278], [458, 247], [471, 247], [484, 252], [497, 298]];
  const x = Array.from({ length: 32 }, (_, i) => 96 + i * 13.7);
  const g = [430, 434, 432, 430, 433, 428, 426, 430, 432, 428, 433, 431, 426, 428, 425, 430, 424, 430, 428, 431, 425, 427, 432, 428, 430, 429, 432, 427, 430, 428, 431, 430];
  const yl = [478, 490, 492, 488, 490, 486, 492, 484, 480, 488, 482, 478, 486, 514, 492, 491, 494, 488, 500, 507, 496, 486, 486, 490, 484, 500, 488, 482, 486, 480, 484, 488];
  const pu = [528, 540, 536, 541, 538, 540, 540, 530, 534, 530, 526, 528, 538, 550, 532, 524, 530, 538, 530, 546, 552, 540, 540, 532, 534, 540, 536, 531, 530, 534, 538, 534];
  const src = [523, 514, 495, 468, 569, 528, 441, 521, 521, 476];
  const dev = [828, 824, 802, 814, 816, 826, 827, 826, 838, 845, 853, 861, 856, 852, 849, 850, 847, 845, 839, 838, 835, 832, 834, 829];
  return (
    <Preview box="69 90 876 828">
      <P x={69} y={90} r={945} b={918} fill="#323137" />
      <T x={69} y={104} s={11} bold w={70} fill="#e8e8ea">Мониторинг</T>
      <T x={69} y={386} s={11} bold w={112} fill="#e8e8ea">Источники трафика</T>
      <T x={69} y={668} s={11} bold w={66} fill="#e8e8ea">Технологии</T>

      <P x={69} y={111} r={503} b={363} />
      <T x={76} y={124} s={8.5} bold w={67}>Динамика трафика</T>
      <Dots x={493} y={122} />
      {[[156, 26], [247, 25], [337, 24], [426, 24]].map(([bx, w]) => (
        <rect key={bx} x={bx} y={138} width={w} height={189} fill="#56555b" />
      ))}
      <Grid x={92} r={499} ys={[138, 169, 201, 232, 264, 295, 327]} xs={x.slice(0, 30).map((v) => v + 3)} />
      <Axis x={88} ys={[138, 169, 201, 232, 264, 295, 327]} labels={["1200", "1000", "800", "600", "400", "200", "0"]} />
      <path d={path(visits)} fill="none" stroke="#5580b8" strokeWidth="2.4" />
      <path d={path(users.map(([a, b]) => [a, b + 4] as Pt))} fill="none" stroke="#b5495a" strokeWidth="2.2" />
      <path d={path(users)} fill="none" stroke="#7da656" strokeWidth="2.4" />
      <T x={90} y={337} s={6.2} w={405} fill="#9a9a9f">01.08.21  03.08.21  05.08.21  07.08.21  09.08.21  11.08.21  13.08.21  15.08.21  17.08.21  19.08.21  21.08.21  23.08.21</T>
      {[["#5580b8", 219, "Посетители"], ["#b5495a", 271, "Просмотры"], ["#7da656", 325, "Визиты"]].map(([c, lx, t]) => (
        <g key={t}>
          <path d={`M${lx} 350h8`} stroke={c as string} strokeWidth="2.4" />
          <T x={(lx as number) + 9} y={353} s={7} fill="#b5b5ba">{t}</T>
        </g>
      ))}

      {([[510, 651, "Отказы", 528, 645, 170], [655, 798, "Глубина просмотров", 672, 792, 155], [802, 945, "Время на сайте", 825, 939, 182]] as [number, number, string, number, number, number][]).map(([l, r, t, a, b, y], i) => (
        <g key={l}>
          <P x={l} y={111} r={r} b={235} />
          <T x={l + 7} y={124} s={8.5} bold>{t}</T>
          <Dots x={r - 13} y={122} />
          <Grid x={a} r={b} ys={[138, 158, 178, 198, 217]} />
          {[0, 1, 2, 3].map((k) => (
            <rect key={k} x={a + 18 + k * 26} y={138} width={7} height={79} fill="#56555b" />
          ))}
          <path
            d={area(
              noisy(i === 2 ? [[825, 182], [840, 184], [860, 186], [875, 180], [888, 166], [898, 186], [908, 180], [918, 180], [925, 162], [939, 184]] : i === 1 ? [[672, 156], [684, 146], [692, 156], [730, 154], [792, 155]] : [[a, y - 2], [b, y]], 3.4, 2.6, 60 + i), 217)}
            fill="#5a8dca"
            stroke="#64a2ec"
          />
          <Axis x={a - 6} ys={[138, 178, 217]} labels={i === 1 ? ["4", "2", "0"] : ["20", "10", "0"]} />
          <Labels y={228} s={6.5} items={[[a + 27, "01.08.21"], [a + 80, "15.08.21"]]} />
        </g>
      ))}

      <P x={510} y={240} r={945} b={363} />
      <T x={516} y={253} s={8.5} bold w={139}>Показатели визитов по типам устройств</T>
      <Dots x={932} y={250} />
      <P x={510} y={263} r={943} b={281} fill="#2c2b31" />
      {[[563, "Визиты"], [606, "Посетители"], [663, "Доля новых"], [742, "Просмотры"], [797, "Время на сайте"], [880, "Глубина"]].map(([tx, t]) => (
        <T key={t} x={tx as number} y={270} s={7.2} bold>{t}</T>
      ))}
      <T x={663} y={278} s={7.2} bold>посетителей</T>
      <T x={797} y={278} s={7.2} bold>(минуты)</T>
      <T x={880} y={278} s={7.2} bold>просмотра</T>
      {["PC", "Смартфоны", "Планшет", "TV"].map((t, i) => (
        <g key={t}>
          <path d={`M510 ${297 + i * 14.6}H943`} stroke="#4e4d53" />
          <T x={514} y={292 + i * 14.6} s={7.5} bold>{t}</T>
          {[[597, ["11 259", "1 877", "171", "1"][i]], [653, ["8 501", "1 333", "151", "1"][i]], [731, ["77,88", "77,41", "83,56", "100,00"][i]], [788, ["27 333", "2 804", "335", "3"][i]], [870, ["174,27", "77,35", "19,24", "41,00"][i]], [939, ["1,83", "1,56", "1,37", "1,00"][i]]].map(([vx, v]) => (
            <T key={vx as number} x={vx as number} y={292 + i * 14.6} s={7.5} bold anchor="end">{v}</T>
          ))}
        </g>
      ))}
      <path d="M558 263V342M601 263V342M658 263V342M736 263V342M792 263V342M875 263V342" stroke="#4e4d53" />

      <P x={69} y={393} r={528} b={645} />
      <T x={76} y={406} s={8.5} bold w={125}>Доля источников трафика, визиты</T>
      <Dots x={518} y={404} />
      <Axis x={86} ys={[420, 457, 493, 529, 566, 602]} labels={["100", "80", "60", "40", "20", "0"]} />
      <P x={96} y={420} r={521} b={602} fill="#5a93d8" />
      <path d={area(x.map((v, i) => [v, g[i]] as Pt), 602)} fill="#87b35e" />
      <path d={area(x.map((v, i) => [v, yl[i]] as Pt), 602)} fill="#d9aa52" />
      <path d={area(x.map((v, i) => [v, yl[i] + (i < 6 ? 5 : 2)] as Pt), 602)} fill="#c99db5" />
      <path d={area(x.map((v, i) => [v, pu[i]] as Pt), 602)} fill="#986c97" />
      <path d="M96 602L108 598L130 602ZM286 602L300 592L345 599L380 602ZM395 602L430 599L470 602Z" fill="#3a6298" />
      {[156, 247, 337, 426].map((bx) => (
        <rect key={bx} x={bx} y={420} width={25} height={182} fill="#fff" opacity="0.035" />
      ))}
      <T x={88} y={611} s={6.2} w={430} fill="#9a9a9f">01.08.21  03.08.21  05.08.21  07.08.21  09.08.21  11.08.21  13.08.21  15.08.21  17.08.21  19.08.21  21.08.21  23.08.21</T>
      {[["#64a2ec", 168, 622], ["#ec4b68", 214, 622], ["#95cc60", 288, 622], ["#f3c556", 345, 622], ["#d9a0c0", 405, 622], ["#83c4e8", 456, 622], ["#e88a98", 96, 629], ["#5d9c36", 164, 629], ["#e8902c", 195, 629], ["#986c97", 306, 629], ["#3a78c8", 384, 629]].map(([c, lx, ly]) => (
        <rect key={`${lx}`} x={lx as number} y={ly as number} width={6} height={6} fill={c as string} />
      ))}
      <T x={177} y={628} s={6.5} w={328} fill="#b5b5ba">Сайт ru/fp   Поисковые системы   Direct traffic   Internal traffic   Ad traffic   Messenger traffic</T>
      <T x={104} y={635} s={6.5} w={348} fill="#b5b5ba">Social network traffic   Mail   Recommendation system traffic   Link traffic   Cached page traffic</T>

      <P x={534} y={393} r={945} b={645} />
      <T x={541} y={406} s={8.5} bold w={146}>Отказы по последнему источнику трафика</T>
      <Dots x={932} y={404} />
      <Grid x={552} r={940} ys={[420, 448, 475, 503, 531, 559, 586, 614]} xs={src.map((_, i) => 571.5 + i * 38.8)} />
      <Axis x={546} ys={[420, 448, 475, 503, 531, 559, 586, 614]} labels={["70", "60", "50", "40", "30", "20", "10", "0"]} />
      {src.map((y, i) => (
        <rect key={i} x={562.5 + i * 38.8} y={y} width={18} height={614 - y} fill="#64a2ec" stroke="#3f6496" strokeWidth="1.2" />
      ))}
      <Labels y={624} s={6.5} fill="#b5b5ba" items={["Direct traffic", "Search", "Link traffic", "Ad traffic", "Internal", "Social", "Messenger", "Mailing", "Recommend", "Cached page"].map((t, i) => [571.5 + i * 38.8, t] as [number, string])} />
      <Labels y={630} s={6.5} fill="#b5b5ba" items={["", "engine", "", "", "traffic", "network", "traffic", "traffic", "", "traffic"].map((t, i) => [571.5 + i * 38.8, t] as [number, string])} />

      <P x={69} y={675} r={528} b={918} />
      <T x={76} y={688} s={8.5} bold w={115}>Визиты по типам устройств и ОС</T>
      <Dots x={518} y={686} />
      <P x={75} y={702} r={337} b={918} fill="#64a2ec" />
      <P x={339} y={702} r={422} b={892} fill="#64a2ec" />
      <P x={339} y={894} r={413} b={918} fill="#64a2ec" />
      <P x={415} y={894} r={422} b={918} fill="#5a93d8" />
      <P x={425} y={702} r={523} b={850} fill="#ec4b68" />
      <P x={425} y={852} r={523} b={906} fill="#ec4b68" />
      <P x={425} y={909} r={499} b={918} fill="#95cc60" />
      <P x={501} y={909} r={523} b={918} fill="#95cc60" />
      {[[77, 710, "PC"], [77, 717, "Windows"], [339, 710, "PC"], [339, 717, "Mac OS"], [426, 710, "Смартфоны"], [426, 717, "Google Android"], [426, 859, "Смартфоны"], [426, 866, "iOS"], [339, 902, "PC"], [339, 909, "GNU/Linux"], [426, 915, "Google Android"]].map(([tx, ty, t]) => (
        <T key={`${tx}-${ty}`} x={tx as number} y={ty as number} s={7} fill="#fff">{t}</T>
      ))}

      <P x={534} y={675} r={945} b={918} />
      <T x={541} y={688} s={8.5} bold w={168}>Соотношение типов устройств по времени суток</T>
      <Dots x={932} y={686} />
      <Grid x={552} r={940} ys={[702, 738, 774, 810, 846, 882]} />
      <Axis x={549} ys={[702, 738, 774, 810, 846, 882]} labels={["100", "80", "60", "40", "20", "0"]} />
      {dev.map((y, i) => (
        <g key={i}>
          <rect x={558 + i * 16} y={702} width={10} height={180} fill="#2e4e78" />
          <rect x={560 + i * 16} y={702} width={7.5} height={180} fill="#64a2ec" />
          <rect x={560 + i * 16} y={y} width={7.5} height={882 - y} fill="#ec4b68" />
          <rect x={560 + i * 16} y={i === 3 ? 876 : 879.5} width={7.5} height={i === 3 ? 6 : 2.5} fill={i % 3 < 2 ? "#95cc60" : "#ec4b68"} />
          <text x={568 + i * 16} y={889} fontSize={6.5} fill="#9a9a9f" textAnchor="end" transform={`rotate(-45 ${568 + i * 16} 889)`}>{`${String(i).padStart(2, "0")}:00`}</text>
        </g>
      ))}
      {[["#64a2ec", 672, "PC"], ["#ec4b68", 699, "Смартфоны"], ["#95cc60", 756, "Планшет"], ["#f3c556", 797, "TV"]].map(([c, lx, t]) => (
        <g key={t}>
          <circle cx={lx as number} cy={913} r={3.6} fill={c as string} />
          <T x={(lx as number) + 6} y={915} s={7} fill="#b5b5ba">{t}</T>
        </g>
      ))}
    </Preview>
  );
}

/* ---------- preview 5: geo layers ---------- */

const GEO_ROWS: [string[], number, number, number][] = [
  [["Автомобильные", "услуги"], 27, 13, 0],
  [["АЗС"], 32, 0, 38],
  [["Аптеки"], 15, 1, 2],
  [["Банкоматы"], 6, 3, 0],
  [["Барбершоп"], 3, 0, 2],
  [["Гостиницы"], 60, 7, 2],
  [["Головные..."], 9, 3, 0],
  [["Досуг,", "спорт,", "хобби"], 11, 14, 0],
  [["Кальян-бар"], 10, 0, 11],
  [["Копировальный", "центр"], 2, 0, 1.5],
  [["Кофейни"], 51, 1, 11],
  [["Курсы", "иностранных", "языков"], 0, 0, 0],
  [["Магазин ..."], 3, 1, 0],
  [["Магазины", "продуктов", "и напитков"], 34, 9, 1.5],
  [["Медицинские", "лаборатории"], 1, 0, 0],
  [["Отели,", "хостелы,", "общежития"], 2.5, 2.5, 0],
  [["Пиццерии"], 49, 0, 41],
  [["Стоматологическая", "клиника"], 3, 0, 0],
  [["Суши-бар"], 43, 0, 50],
  [["Торговые..."], 26, 34, 0],
  [["Уход за", "внешностью"], 8, 7, 0],
];

function inside(x: number, y: number, poly: Pt[]) {
  let c = false;
  for (let i = 0, j = poly.length - 1; i < poly.length; j = i++) {
    const [xi, yi] = poly[i];
    const [xj, yj] = poly[j];
    if (yi > y !== yj > y && x < ((xj - xi) * (y - yi)) / (yj - yi) + xi) c = !c;
  }
  return c;
}

const MOSCOW: Pt[] = [
  [762, 325], [785, 327], [792, 350], [808, 352], [818, 330], [826, 345], [850, 348], [870, 352], [888, 362], [900, 385], [912, 410], [918, 432], [940, 444], [938, 460], [912, 456], [905, 480], [895, 502], [875, 510], [850, 512], [836, 525], [826, 540], [838, 556], [820, 578], [808, 566], [790, 580], [804, 602], [794, 630], [786, 664], [755, 662], [738, 655], [722, 664], [708, 672], [702, 694], [688, 702], [676, 692], [665, 682], [680, 668], [698, 656], [694, 644], [672, 632], [662, 612], [642, 604], [624, 580], [636, 562], [646, 546], [668, 550], [672, 572], [690, 576], [712, 568], [716, 545], [704, 526], [702, 504], [722, 502], [740, 478], [768, 474], [784, 452], [776, 420], [782, 408], [754, 404], [780, 390], [770, 350],
];

function GeoPreview() {
  const r = rng(99);
  const hexes: { x: number; y: number; c: string }[] = [];
  let row = 0;
  for (let y = 328; y < 706; y += 8.6, row++) {
    for (let x = 620 + (row % 2) * 5; x < 945; x += 10) {
      if (!inside(x, y, MOSCOW)) continue;
      const d = Math.hypot(x - 842, y - 425) + (r() - 0.5) * 26;
      if (y > 500 && r() < 0.07) continue;
      const c = d < 20 ? (r() < 0.35 ? "#c98f9c" : "#cdd5e4") : d < 38 ? "#6d93cf" : d < 62 ? "#3f6fba" : d < 98 ? "#2f5ca6" : "#18419a";
      hexes.push({ x, y, c });
    }
  }
  const cols: [number, number, number, string, string, string, number][] = [
    [81, 240, 168, "Спрос", "#64a2ec", "Число поисковых запросов", 0],
    [246, 414, 344, "Предложение", "#ec4b68", "Число организаций", 1],
    [422, 590, 519, "Спрос на предлож...", "#f6c556", "Спрос / Предложение", 2],
  ];
  const names: [number, number, string][] = [
    [816, 136, "Дмитров"], [808, 162, "Деденево"], [812, 184, "Яхрома"], [619, 164, "Клин"], [768, 198, "Икша"], [669, 213, "Солнечногорск"], [691, 231, "Сенеж"], [907, 244, "Софрино"], [811, 260, "Некрасовский"], [690, 268, "Поварово"], [905, 297, "Пушкино"], [805, 297, "Лобня"], [734, 305, "Зеленоград"], [795, 355, "Химки"], [876, 345, "Мытищи"], [937, 340, "Щёлково"], [704, 383, "Нахабино"], [752, 383, "Красногорск"], [637, 433, "Звенигород"], [745, 457, "Одинцово"], [932, 440, "Железнод."], [687, 494, "Краснознаменск"], [690, 521, "Апрелевка"], [930, 400, "Балашиха"], [922, 505, "Лыткарино"], [867, 515, "Видное"], [822, 573, "Троицк"], [883, 573, "Домодедово"], [894, 606, "Востряково"], [820, 602, "Климовск"], [818, 633, "Львовский"], [810, 664, "Столбовая"], [917, 656, "Барыбино"], [932, 682, "Михнево"], [799, 713, "Чехов"], [660, 723, "Балабаново"], [935, 722, "Жилёво"], [840, 752, "Оболенск"], [781, 769, "Кременки"], [881, 766, "Ступино"], [652, 821, "Малоярославец"], [789, 820, "Серпухов"], [899, 837, "Кашира"], [734, 843, "Протвино"], [843, 860, "Пущино"], [629, 908, "Калуга"], [725, 906, "Таруса"], [785, 906, "Заокский"], [620, 597, "Можайск"], [612, 507, "Руза"], [612, 765, "Обн"], [935, 908, "Венёв"],
  ];
  return (
    <Preview box="81 90 876 828">
      <P x={81} y={90} r={957} b={918} fill="#2d2c33" />
      {cols.map(([l, rr, ax, title, color, foot, k]) => (
        <g key={l}>
          <P x={l} y={92} r={rr} b={918} />
          <T x={l === 81 ? 82 : l + 11} y={111} s={10} bold>{title}</T>
          <Dots x={rr - 19} y={107} />
          <path d={`M${ax} 132V862M${ax + 33} 132V862M${ax + 64} 132V862`} stroke="#57565c" strokeWidth="1.4" />
          {GEO_ROWS.map(([lines, a, b, c], i) => {
            const y = 149 + i * 35.35;
            const v = [a, b, c][k];
            return (
              <g key={i}>
                <path d={`M${ax} ${y}H${ax + 64}`} stroke="#504f55" strokeWidth="1.2" />
                {lines.map((t, n) => (
                  <T key={t} x={ax - 10} y={y + 3 + (n - (lines.length - 1) / 2) * 10.5} s={8.5} w={t.length > 15 ? 75 : undefined} fill="#b8b8bd" anchor="end">{t}</T>
                ))}
                {v > 0 && <rect x={ax} y={y - 9} width={v} height={18} fill={color} opacity={v < 4 ? 0.75 : 1} />}
              </g>
            );
          })}
          <T x={ax} y={874} s={8} fill="#a5a5aa" anchor="middle">0</T>
          <T x={ax + 62} y={874} s={8} fill="#a5a5aa" anchor="end">{["2M", "200k  4...", "250k  5..."][k]}</T>
          <T x={l === 81 ? 82 : l + 7} y={906} s={10} bold>{foot}</T>
        </g>
      ))}
      <P x={597} y={92} r={957} b={124} />
      <T x={608} y={111} s={10} bold>Спрос</T>
      <T x={652} y={111} s={10} fill="#8f8f94" w={252}>Предложение   Спрос на предложение на город</T>
      <Dots x={948} y={107} />
      <DarkMap x={597} y={124} r={957} b={918} seed={5} names={names} />
      <path
        d="M597 140Q660 180 700 250T762 330M640 124Q700 230 740 270M731 266L800 250L840 200L820 124M597 330Q680 320 765 330M765 330L775 440M597 420Q700 440 775 436M775 436Q720 480 650 500T597 560M707 570L597 640M795 615L770 700L700 800L597 900M842 500Q840 600 870 700T850 850L845 918M895 622Q900 700 931 765T957 860M895 622L820 560M597 720Q700 760 760 860M895 622Q920 540 957 500M931 765Q850 740 795 615M880 410Q930 420 957 425M620 124L640 200L597 240M915 205Q890 250 830 270T731 266M597 860Q650 820 720 840T957 880"
        fill="none"
        stroke="#1f4547"
        strokeWidth="1.8"
      />
      <path d="M600 270L625 240L630 270L615 300L632 310M820 232Q850 262 885 290L868 286L845 310M672 195L690 215" fill="none" stroke="#6a3f3b" strokeWidth="3" />
      <path d="M626 545Q600 600 650 660T720 780T760 850T830 860T870 910M830 860L880 840L957 862" fill="none" stroke="#4a4038" strokeWidth="1.5" />
      {[[731, 266], [763, 319], [775, 436], [707, 570], [795, 615], [895, 622], [931, 765]].map(([x, y]) => (
        <rect key={x} x={x - 4.5} y={y - 4.5} width="9" height="9" rx="2" fill="#2b8078" />
      ))}
      {[[677, 317, 20], [788, 320, 9], [951, 220, 12], [920, 585, 12], [921, 698, 14], [821, 789, 18]].map(([x, y, w]) => (
        <rect key={x} x={x - w / 2} y={y - 5} width={w} height="10" rx="2" fill={x === 821 ? "#76658f" : "#9a6456"} />
      ))}
      <g opacity="0.96">
        {hexes.map(({ x, y, c }, i) => (
          <circle key={i} cx={x} cy={y} r={5.6} fill={c} />
        ))}
      </g>
      {[[687, 442], [702, 435], [702, 711]].map(([x, y]) => (
        <circle key={y} cx={x} cy={y} r={5.5} fill="#18419a" />
      ))}
      <circle cx={846} cy={421} r={5.5} fill="#b8323c" />
      <circle cx={836} cy={420} r={5} fill="#d66a6a" />
      <defs>
        <linearGradient id="geoScale"><stop stopColor="#1d46a8" /><stop offset=".5" stopColor="#efe9ee" /><stop offset="1" stopColor="#a82a34" /></linearGradient>
      </defs>
      <P x={826} y={144} r={957} b={204} fill="#313036" />
      <T x={831} y={162} s={9.5} fill="#b5b5ba">Спрос</T>
      <rect x={831} y={171} width={123} height={6} fill="url(#geoScale)" />
      <T x={831} y={190} s={8.5} bold>32</T>
      <T x={892} y={190} s={8.5} bold anchor="middle">1.56M</T>
      <T x={954} y={190} s={8.5} bold anchor="end">3.12M</T>
      <Zoomer x={615} y={215} b={348} />
    </Preview>
  );
}

/* ---------- icons ---------- */

const BoltIcon = () => (
  <svg viewBox="0 0 44 44" className="size-11" fill="none" stroke="#f7e3fb" strokeWidth="3" strokeLinejoin="round">
    <path d="M16.6 9.1H25c1 0 1.600.9 1.300 1.900L24 18h8.400c1.900 0 2.400 1.500 1.400 2.900L20.400 35.300c-1.500 1.600-4.100.4-3.500-2L19.300 26.100H11.400c-1.200 0-1.800-.9-1.400-2.100L14.700 10.500c.3-.9 1-1.400 1.900-1.400Z" />
  </svg>
);

const RingsIcon = () => (
  <svg viewBox="0 0 44 44" className="size-11" fill="none" stroke="#e0f7de" strokeWidth="3">
    <circle cx="17" cy="22" r="9.600" />
    <circle cx="26.900" cy="22" r="9.600" />
  </svg>
);

const ChartIcon = () => (
  <svg viewBox="0 0 44 44" className="size-11" fill="none" stroke="#e6edff" strokeWidth="3" strokeLinejoin="round">
    <path d="M17.500 23.500h-5.500a3.200 3.200 0 0 0-3.200 3.200v3.100a2.700 2.700 0 0 0 2.700 2.700h6ZM17.500 32.500V20.200a2.700 2.700 0 0 1 2.700-2.700h6.300v15ZM26.500 32.500V14.700a3.200 3.200 0 0 1 3.200-3.200h2.600a3.200 3.200 0 0 1 3.200 3.200v15.100a2.700 2.700 0 0 1-2.700 2.700Z" />
  </svg>
);

const BoardIcon = () => (
  <svg viewBox="0 0 44 44" className="size-11" fill="none" stroke="#fff0e2" strokeWidth="3">
    <rect x="9.300" y="11.800" width="25.400" height="20.700" rx="4.500" />
    <path d="M22 12.500V32M10 22.100H34" stroke="#ffe2c8" strokeWidth="2.600" />
  </svg>
);

/* ---------- page ---------- */

interface Line {
  text: string;
  track: string;
}

interface Action {
  bg: string;
  icon: ReactNode;
  title: Line;
  lines: Line[];
  button: Line;
  width: string;
  marked?: boolean;
}

const ACTIONS: Action[] = [
  {
    bg: "bg-[#9a2fa3]",
    icon: <BoltIcon />,
    title: { text: "Подключения", track: "tracking-[-0.75px]" },
    lines: [
      { text: "Подключайте свои источники", track: "tracking-[-0.64px]" },
      { text: "данных", track: "tracking-[-0.7px]" },
    ],
    button: { text: "Создать подключение", track: "tracking-[-0.64px]" },
    width: "w-[332px]",
    marked: true,
  },
  {
    bg: "bg-[#0abf04]",
    icon: <RingsIcon />,
    title: { text: "Датасеты", track: "tracking-[-0.2px]" },
    lines: [
      { text: "Формируйте наборы данных с", track: "tracking-[-0.65px]" },
      { text: "вычисляемыми полями и", track: "tracking-[-1px]" },
      { text: "агрегациями", track: "tracking-[-0.6px]" },
    ],
    button: { text: "Создать датасет", track: "tracking-[-0.36px]" },
    width: "w-[262px]",
  },
  {
    bg: "bg-[#5282ff]",
    icon: <ChartIcon />,
    title: { text: "Чарты", track: "tracking-[-0.6px]" },
    lines: [
      { text: "Визуализируйте данные в виде", track: "tracking-[-0.56px]" },
      { text: "диаграмм и таблиц", track: "tracking-[-0.77px]" },
    ],
    button: { text: "Создать чарт", track: "tracking-[-0.5px]" },
    width: "w-[224px]",
  },
  {
    bg: "bg-[#ff8c3c]",
    icon: <BoardIcon />,
    title: { text: "Дашборды", track: "tracking-[-0.65px]" },
    lines: [
      { text: "Создавайте страницы с наборами", track: "tracking-[-0.62px]" },
      { text: "диаграмм, таблиц и фильтров", track: "tracking-[-0.74px]" },
    ],
    button: { text: "Создать дашборд", track: "tracking-[-0.64px]" },
    width: "w-[278px]",
  },
];

const EXAMPLES: { preview: ReactNode; lines: Line[] }[] = [
  {
    preview: <DemoPreview />,
    lines: [
      { text: "Демонстрационный", track: "tracking-[-0.6px]" },
      { text: "дашборд DataLens", track: "tracking-[-0.68px]" },
    ],
  },
  {
    preview: <CovidPreview />,
    lines: [
      { text: "Статистика", track: "tracking-[-0.2px]" },
      { text: "по COVID-19", track: "tracking-[-0.4px]" },
    ],
  },
  {
    preview: <WeatherPreview />,
    lines: [
      { text: "Исторические", track: "tracking-[-0.28px]" },
      { text: "данные", track: "tracking-[-0.5px]" },
      { text: "Яндекс.Погоды", track: "tracking-[-0.54px]" },
    ],
  },
  {
    preview: <MetricaPreview />,
    lines: [
      { text: "Аналитика", track: "tracking-[-0.3px]" },
      { text: "по счетчику", track: "tracking-[-0.5px]" },
      { text: "Яндекс.Метрики", track: "tracking-[-0.4px]" },
    ],
  },
  {
    preview: <GeoPreview />,
    lines: [
      { text: "Геослои по спросу", track: "tracking-[-0.48px]" },
      { text: "и предложению", track: "tracking-[-0.7px]" },
    ],
  },
];

function ActionCard({ a }: { a: Action }) {
  return (
    <section className="relative flex h-[440px] w-[496px] shrink-0 flex-col items-start rounded-2xl bg-[#424147] px-10 pt-[50px] pb-10 shadow-[0_3px_18px_rgba(0,0,0,0.14)]">
      <div className={`ml-2.5 size-11 rounded-lg ${a.bg}`}>{a.icon}</div>
      <h2 className={`mt-[33px] text-[29px] leading-10 font-semibold whitespace-nowrap text-[#e5e5e6] ${a.title.track}`}>{a.title.text}</h2>
      <p className="mt-4 text-[26px] leading-9 whitespace-nowrap text-[#9d9da0]">
        {a.lines.map((l) => (
          <span key={l.text} className={`block ${l.track}`}>
            {l.text}
          </span>
        ))}
      </p>
      <button className={`mt-auto h-[72px] rounded-2xl bg-[#55545a] pb-0.5 text-center text-[26px] whitespace-nowrap text-[#e7e7e8] ${a.width} ${a.button.track}`}>
        {a.button.text}
      </button>
      {a.marked && <div className="absolute -top-[27px] -right-[22px] -bottom-[23px] -left-[21px] border-[5px] border-[#22b14c]" />}
    </section>
  );
}

function MarketplaceCard() {
  return (
    <section className="relative h-[464px] w-[316px] shrink-0 overflow-hidden rounded-2xl bg-[#323137] shadow-[0_3px_18px_rgba(0,0,0,0.14)]">
      <svg viewBox="87 42 948 1392" className="absolute inset-0 size-full" fill="#3f3e44">
        <path d="M1035 228L860 280Q787 305 787 360V420Q787 442 805 465L1035 762Z" />
        <path d="M87 775L240 733Q320 712 372 780L855 1434H350L87 1068Z" />
        <path d="M593 870Q593 815 660 790L830 738Q905 718 955 780L1035 880V1434H950L610 975Q593 950 593 930Z" />
        <path d="M87 1260Q125 1262 155 1300L247 1434H87Z" />
      </svg>
      <div className="relative pt-[171px] pl-6 text-[30px] leading-10 whitespace-nowrap text-[#e2e2e3]">
        <div className="tracking-[-0.75px]">Перейти в</div>
        <div className="tracking-[-0.85px]">Marketplace</div>
        <svg viewBox="0 0 28 22" className="mt-2.5 ml-1.5 h-[22px] w-7" fill="none" stroke="#e2e2e3" strokeWidth="3.100" strokeLinecap="round" strokeLinejoin="round">
          <path d="M2.200 11H26M17.200 2.300L26 11L17.200 19.700" />
        </svg>
      </div>
    </section>
  );
}

export default function App() {
  return (
    <main className="h-[1160px] w-[2218px] overflow-hidden bg-[#2d2c33] pt-[52px] pl-[49px] font-['Noto_Sans',sans-serif]">
      <div className="flex gap-12">
        {ACTIONS.map((a) => (
          <ActionCard key={a.title.text} a={a} />
        ))}
      </div>
      <h1 className="mt-[79px] text-[39px] leading-[48px] font-semibold tracking-[-1.35px] text-[#e1e1e2]">Примеры дашбордов</h1>
      <div className="mt-[65px] flex gap-12">
        {EXAMPLES.map((e) => (
          <article key={e.lines[0].text} className="flex h-[464px] w-[316px] shrink-0 flex-col overflow-hidden rounded-b-2xl bg-[#424147] shadow-[0_3px_18px_rgba(0,0,0,0.14)]">
            <div className="flex h-[308px] shrink-0 items-center justify-center bg-[#323137]">{e.preview}</div>
            <h3 className="px-6 pt-[23px] text-[26px] leading-9 font-normal whitespace-nowrap text-[#e5e5e6]">
              {e.lines.map((l) => (
                <span key={l.text} className={`block ${l.track}`}>
                  {l.text}
                </span>
              ))}
            </h3>
          </article>
        ))}
        <MarketplaceCard />
      </div>
    </main>
  );
}
